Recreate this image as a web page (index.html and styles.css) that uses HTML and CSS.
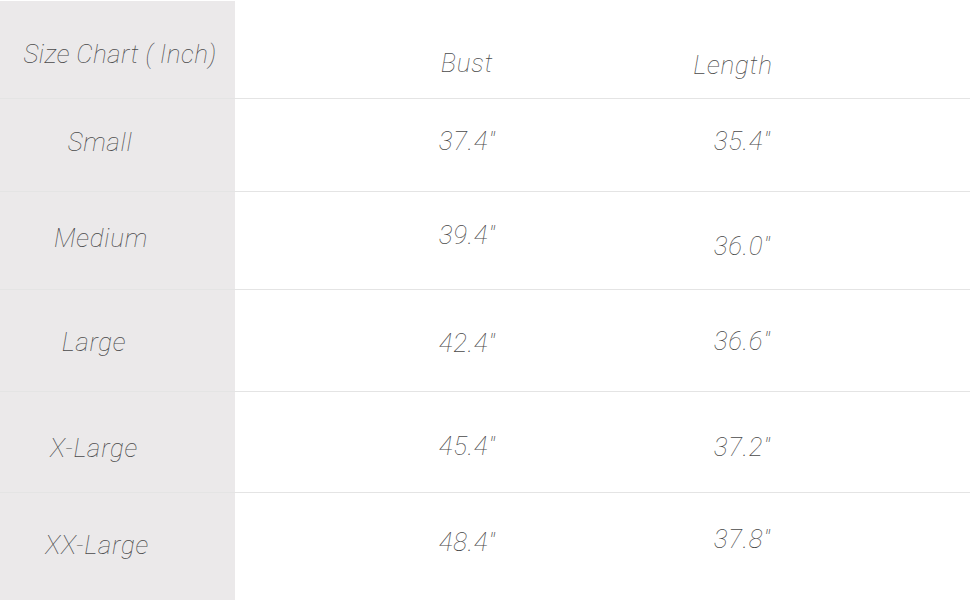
FILE: index.html
```html
<!DOCTYPE html>
<html>
<head>
<meta charset="utf-8">
<link rel="stylesheet" href="styles.css">
</head>
<body>
<div class="chart">
  <div class="row r1">
    <div class="cell label h">Size Chart ( Inch)</div>
    <div class="gap"></div>
    <div class="cell bust">Bust</div>
    <div class="cell len">Length</div>
  </div>
  <div class="row r2">
    <div class="cell label s">Small</div>
    <div class="gap"></div>
    <div class="cell bust">37.4"</div>
    <div class="cell len">35.4"</div>
  </div>
  <div class="row r3">
    <div class="cell label m">Medium</div>
    <div class="gap"></div>
    <div class="cell bust">39.4"</div>
    <div class="cell len">36.0"</div>
  </div>
  <div class="row r4">
    <div class="cell label l">Large</div>
    <div class="gap"></div>
    <div class="cell bust">42.4"</div>
    <div class="cell len">36.6"</div>
  </div>
  <div class="row r5">
    <div class="cell label xl">X-Large</div>
    <div class="gap"></div>
    <div class="cell bust">45.4"</div>
    <div class="cell len">37.2"</div>
  </div>
  <div class="row r6">
    <div class="cell label xxl">XX-Large</div>
    <div class="gap"></div>
    <div class="cell bust">48.4"</div>
    <div class="cell len">37.8"</div>
  </div>
</div>
</body>
</html>
```
FILE: styles.css
```css
html, body {
  margin: 0;
  padding: 0;
  background: #ffffff;
  overflow: hidden;
}
.chart {
  width: 970px;
  height: 600px;
  display: flex;
  flex-direction: column;
  font-family: "Roboto", "Liberation Sans", sans-serif;
  font-weight: 100;
  font-style: italic;
  font-size: 26px;
  letter-spacing: 0.7px;
  line-height: 28px;
  color: #4a4a4a;
  padding-top: 1px;
  box-sizing: border-box;
}
.row {
  display: grid;
  grid-template-columns: 235px 115px 234px 1fr;
  border-bottom: 1px solid #e4e4e4;
  flex: none;
}
.r1 { height: 97px; }
.r2 { height: 92px; }
.r3 { height: 97px; }
.r4 { height: 101px; }
.r5 { height: 100px; }
.r6 { height: 107px; border-bottom: none; }

.cell {
  text-align: center;
  white-space: nowrap;
  box-sizing: border-box;
}
.label {
  background: #ebe9ea;
}
.len {
  width: 316px;
}
.r1 .len { padding-right: 18px; }

/* label horizontal offsets */
.label.h { padding-left: 5px; letter-spacing: 0.4px; }
.label.s { padding-right: 35px; }
.label.m { padding-right: 33px; }
.label.l { padding-right: 47px; }
.label.xl { padding-right: 47px; }
.label.xxl { padding-right: 41px; }

/* vertical positions */
.r1 .label { padding-top: 39px; }
.r1 .bust { padding-top: 48px; }
.r1 .len { padding-top: 50px; }

.r2 .label { padding-top: 29px; }
.r2 .bust { padding-top: 28px; }
.r2 .len { padding-top: 28px; }

.r3 .label { padding-top: 32px; }
.r3 .bust { padding-top: 29px; }
.r3 .len { padding-top: 40px; }

.r4 .label { padding-top: 38px; }
.r4 .bust { padding-top: 39px; }
.r4 .len { padding-top: 37px; }

.r5 .label { padding-top: 42px; }
.r5 .bust { padding-top: 40px; }
.r5 .len { padding-top: 41px; }

.r6 .label { padding-top: 38px; }
.r6 .bust { padding-top: 35px; }
.r6 .len { padding-top: 32px; }
```
